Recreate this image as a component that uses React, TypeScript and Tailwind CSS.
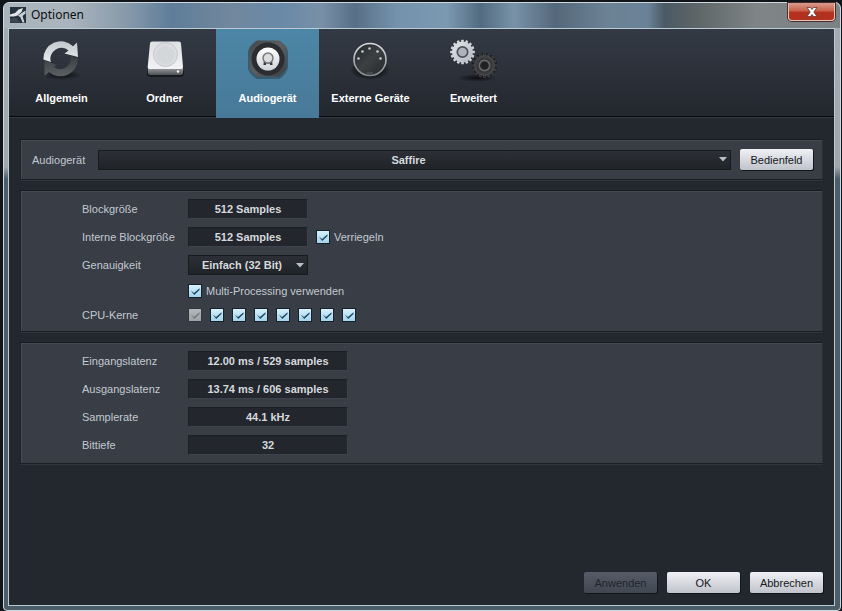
import { useState, type ReactNode } from "react";

function AppLogo() {
  return (
    <svg width="16" height="16" viewBox="0 0 16 16" aria-hidden="true">
      <rect width="16" height="16" fill="#26323d" />
      <path d="M0 7.500 L5 6 L8.500 2.500 L13 1 L11.500 5 L7.500 8.500 L4 9.500 L0 9.500 Z" fill="#dfe5e8" />
      <path d="M8 8.500 L15.500 3.500 V6.500 L12.500 9 L14.500 15.500 H12.500 L10.500 10.500 Z" fill="#c9d1d6" />
      <path d="M0 12 L6 10.500 L10 15.500 H0 Z" fill="#3b4955" />
    </svg>
  );
}

function RefreshIcon() {
  return (
    <svg width="44" height="44" viewBox="0 0 44 44" aria-hidden="true">
      <defs>
        <linearGradient id="rf-light" x1="0" y1="0" x2="0" y2="1">
          <stop offset="0" stopColor="#c3c8cd" />
          <stop offset="1" stopColor="#e9ecee" />
        </linearGradient>
        <linearGradient id="rf-dark" x1="0" y1="0" x2="0" y2="1">
          <stop offset="0" stopColor="#3a3d41" />
          <stop offset="1" stopColor="#5d6063" />
        </linearGradient>
        <radialGradient id="rf-shadow">
          <stop offset="0" stopColor="#0b0c0e" />
          <stop offset="1" stopColor="#0b0c0e" stopOpacity="0" />
        </radialGradient>
      </defs>
      <ellipse cx="22" cy="37" rx="20" ry="5" fill="url(#rf-shadow)" />
      <path d="M38 20.500 A17.500 17.500 0 0 1 9 34 L4.500 38 V22.500 L17 27 L13.500 28.500 A10.500 10.500 0 0 0 30.500 18 Z" fill="url(#rf-dark)" />
      <path d="M3.500 21.500 A17.300 17.300 0 0 1 33 8.300 L37 4.500 L38 19 L24.500 15.500 L28.500 12.500 A11 11 0 0 0 10.800 24 Z" fill="url(#rf-light)" />
    </svg>
  );
}

function DriveIcon() {
  return (
    <svg width="44" height="44" viewBox="0 0 44 44" aria-hidden="true">
      <defs>
        <linearGradient id="dr-top" x1="0" y1="0" x2="0" y2="1">
          <stop offset="0" stopColor="#dfe0e2" />
          <stop offset="1" stopColor="#f1f2f3" />
        </linearGradient>
        <linearGradient id="dr-front" x1="0" y1="0" x2="0" y2="1">
          <stop offset="0" stopColor="#9a9c9f" />
          <stop offset="1" stopColor="#4d5054" />
        </linearGradient>
      </defs>
      <path d="M4 33 H41 V36 Q41 39 37 39 H8 Q4 39 4 36 Z" fill="#17191c" />
      <path d="M5 30 H40 V34.500 Q40 37 37.500 37 H7.500 Q5 37 5 34.500 Z" fill="url(#dr-front)" />
      <path d="M9 3.500 H36 Q37.800 3.500 38 5.500 L40 29 Q40 31 38 31 H6.500 Q4.500 31 4.700 29 L7 5.500 Q7.200 3.500 9 3.500 Z" fill="url(#dr-top)" />
      <circle cx="22.500" cy="16.500" r="12" fill="#dadcdf" stroke="#c6c9cc" />
      <circle cx="22.500" cy="17" r="9" fill="#d3d7da" />
      <circle cx="35" cy="33.500" r="1.200" fill="#f4f4f4" />
    </svg>
  );
}

function AudioIcon() {
  return (
    <svg width="44" height="44" viewBox="0 0 44 44" aria-hidden="true">
      <defs>
        <linearGradient id="au-body" x1="0" y1="0" x2="1" y2="1">
          <stop offset="0" stopColor="#45484b" />
          <stop offset="0.500" stopColor="#5c5e60" />
          <stop offset="1" stopColor="#3b3d40" />
        </linearGradient>
        <linearGradient id="au-ring" x1="0" y1="0" x2="0" y2="1">
          <stop offset="0" stopColor="#ffffff" />
          <stop offset="1" stopColor="#cfd3d8" />
        </linearGradient>
      </defs>
      <path d="M10 3 H34 Q42 9 42 14 V30 Q39 38 33 41 H11 Q4 37 2 31 V13 Q4 7 10 3 Z" fill="#26404f" opacity="0.550" />
      <path d="M11 2.500 H33 L40.500 9.500 V31 L33 38.500 H11 L3.500 31 V9.500 Z" fill="url(#au-body)" />
      <circle cx="22" cy="21" r="16.500" fill="#2b2d30" />
      <circle cx="22" cy="21" r="11.500" fill="url(#au-ring)" />
      <path d="M18 20 H26 L26.500 27 H24 V25.500 H20 V27 H17.500 Z" fill="#34373a" />
      <circle cx="22" cy="20" r="5" fill="#d9dbdd" stroke="#777a7e" strokeWidth="1.500" />
    </svg>
  );
}

function MidiIcon() {
  return (
    <svg width="44" height="44" viewBox="0 0 44 44" aria-hidden="true">
      <defs>
        <linearGradient id="mi-face" x1="0" y1="0" x2="1" y2="1">
          <stop offset="0" stopColor="#25282b" />
          <stop offset="0.500" stopColor="#3d4042" />
          <stop offset="1" stopColor="#25282b" />
        </linearGradient>
        <linearGradient id="mi-rim" x1="0" y1="0" x2="0" y2="1">
          <stop offset="0" stopColor="#dcdee0" />
          <stop offset="1" stopColor="#85888b" />
        </linearGradient>
        <radialGradient id="mi-shadow">
          <stop offset="0.600" stopColor="#15171a" />
          <stop offset="1" stopColor="#15171a" stopOpacity="0" />
        </radialGradient>
      </defs>
      <ellipse cx="21" cy="32" rx="20" ry="10" fill="url(#mi-shadow)" />
      <circle cx="21" cy="21.500" r="16" fill="url(#mi-face)" stroke="url(#mi-rim)" strokeWidth="1.600" />
      <g fill="#c8cacc">
        <circle cx="9.500" cy="20.500" r="1.300" />
        <circle cx="13.500" cy="13.500" r="1.300" />
        <circle cx="20.500" cy="10.500" r="1.300" />
        <circle cx="28.500" cy="13.500" r="1.300" />
        <circle cx="31.500" cy="20.500" r="1.300" />
      </g>
      <path d="M18 35 H24" stroke="#5d6063" />
    </svg>
  );
}

const teeth = Array.from({ length: 16 }, (_, i) => i * 22.5);

function Gear({ x, y, fill, ring, hub }: { x: number; y: number; fill: string; ring: string; hub: string }) {
  return (
    <g transform={`translate(${x} ${y})`}>
      {teeth.map((angle) => (
        <rect key={angle} x="-1.300" y="-12.300" width="2.600" height="3.500" rx="0.500" fill={fill} transform={`rotate(${angle})`} />
      ))}
      <circle r="10.500" fill={fill} />
      <circle r="5.200" fill={hub} stroke={ring} strokeWidth="1.700" />
    </g>
  );
}

function GearsIcon() {
  return (
    <svg width="48" height="44" viewBox="0 0 48 44" aria-hidden="true">
      <defs>
        <radialGradient id="ge-shadow">
          <stop offset="0" stopColor="#0d0e10" />
          <stop offset="1" stopColor="#0d0e10" stopOpacity="0" />
        </radialGradient>
        <linearGradient id="ge-light" x1="0" y1="0" x2="1" y2="1">
          <stop offset="0" stopColor="#e3e6ea" />
          <stop offset="1" stopColor="#b3b8c0" />
        </linearGradient>
        <radialGradient id="ge-dark">
          <stop offset="0.500" stopColor="#2b2d2f" />
          <stop offset="1" stopColor="#4a4b4c" />
        </radialGradient>
      </defs>
      <ellipse cx="27" cy="40" rx="20" ry="4" fill="url(#ge-shadow)" />
      <circle cx="34.500" cy="27.500" r="12.500" fill="#191b1e" />
      <Gear x={34.5} y={27.5} fill="url(#ge-dark)" ring="#66686a" hub="#1f2123" />
      <Gear x={12.5} y={14} fill="url(#ge-light)" ring="#4d535c" hub="#aeb3bc" />
    </svg>
  );
}

const tabs: { name: string; icon: ReactNode }[] = [
  { name: "Allgemein", icon: <RefreshIcon /> },
  { name: "Ordner", icon: <DriveIcon /> },
  { name: "Audiogerät", icon: <AudioIcon /> },
  { name: "Externe Geräte", icon: <MidiIcon /> },
  { name: "Erweitert", icon: <GearsIcon /> },
];

const fieldStyle =
  "h-5 rounded-none border border-[#3d434a] border-t-[#1d2126] border-l-[#1d2126] bg-[#23272d] text-center text-[11px] font-bold leading-[18px] text-[#d5d9dd] outline-none";

function Panel({ className, children }: { className: string; children: ReactNode }) {
  return (
    <section
      className={`border border-t-[#181c21] border-l-[#1d2126] border-r-[#2b3037] border-b-[#1b1f24] bg-[#383d46] shadow-[inset_1px_1px_0_#454a53,0_1px_0_#30353c] ${className}`}
    >
      {children}
    </section>
  );
}

function Dropdown({ id, value, className }: { id: string; value: string; className: string }) {
  return (
    <div className={`grid ${className}`}>
      <select
        id={id}
        defaultValue={value}
        className="col-start-1 row-start-1 h-5 w-full appearance-none border border-[#171a1e] bg-linear-to-b from-[#2c3036] to-[#202429] pr-3 text-center text-[11px] font-bold leading-[18px] text-[#d5d9dd] outline-none"
      >
        <option>{value}</option>
      </select>
      <svg width="8" height="5" viewBox="0 0 8 5" aria-hidden="true" className="pointer-events-none col-start-1 row-start-1 mr-1 self-center justify-self-end">
        <path d="M0 0 H8 L4 4.500 Z" fill="#b9c0c7" />
      </svg>
    </div>
  );
}

function Check({ id, label, disabled = false }: { id: string; label?: string; disabled?: boolean }) {
  return (
    <span className="grid size-3.5 shrink-0 place-items-center">
      <input
        id={id}
        type="checkbox"
        defaultChecked
        disabled={disabled}
        aria-label={label}
        className="peer col-start-1 row-start-1 size-3.5 appearance-none border border-[#15222d] bg-linear-to-b from-[#d6f1fc] to-[#a3d3ea] disabled:border-[#30353c] disabled:from-[#b4b8bc] disabled:to-[#9ea3a8]"
      />
      <svg
        width="10"
        height="10"
        viewBox="0 0 10 10"
        aria-hidden="true"
        className="pointer-events-none invisible col-start-1 row-start-1 text-[#1d4560] peer-checked:visible peer-disabled:text-[#70767c]"
      >
        <path d="M0.800 4.500 L4 7 L9.500 2.200 L9.500 4 L4.200 9 Z" fill="currentColor" />
      </svg>
    </span>
  );
}

function Row({ label, htmlFor, tall = true, children }: { label?: string; htmlFor?: string; tall?: boolean; children: ReactNode }) {
  return (
    <div className={`flex items-center ${tall ? "h-5" : "h-4"}`}>
      <div className="w-[106px] shrink-0 whitespace-nowrap">{label && <label htmlFor={htmlFor}>{label}</label>}</div>
      {children}
    </div>
  );
}

function Button({ children, disabled = false }: { children: ReactNode; disabled?: boolean }) {
  return (
    <button
      type="button"
      disabled={disabled}
      className="h-[21px] w-[73px] shrink-0 rounded-xs bg-linear-to-b from-[#f0f1f5] to-[#c0c3ca] text-center text-[11px] text-[#15181c] shadow-[1px_1px_0_#12151a] disabled:from-[#565c67] disabled:to-[#414751] disabled:text-[#20252c]"
    >
      {children}
    </button>
  );
}

const readings = [
  { id: "in", label: "Eingangslatenz", value: "12.00 ms / 529 samples" },
  { id: "out", label: "Ausgangslatenz", value: "13.74 ms / 606 samples" },
  { id: "rate", label: "Samplerate", value: "44.1 kHz" },
  { id: "depth", label: "Bittiefe", value: "32" },
];

export default function App() {
  const [active, setActive] = useState("Audiogerät");

  return (
    <div className="flex min-h-screen bg-[#11151a] pt-[2px] pr-px pl-[3px] font-['Liberation_Sans',Arial,sans-serif] text-[11px] leading-4 text-[#c3c9d0]">
      <div className="flex flex-1 flex-col rounded-t-md rounded-b-sm border border-[#ced8df] bg-linear-to-b from-[#a4acb2] from-0% via-[#a0a8ae] via-27% to-[#4d5c69] to-29% pr-[5px] pb-[4px] pl-[4px]">
        <header className="-mr-[5px] -ml-[4px] flex h-[25px] items-start justify-between rounded-t-md bg-[linear-gradient(90deg,#aab4bc_0%,#a9b4bc_8%,#8598a9_15%,#5f7d99_20%,#71879d_27%,#6889a7_33%,#7890a7_38%,#587087_42%,#7592ac_47%,#7c99b2_53%,#526b80_57%,#7892a8_61%,#54687a_66%,#6c8294_72%,#6a8298_77%,#4b5a65_79%,#5e6668_83%,#7f8587_90%,#7c8284_100%)] pl-[6px]">
          <div className="flex items-center gap-[5px] pt-1">
            <AppLogo />
            <h1 className="font-['Noto_Sans','Open_Sans',sans-serif] text-xs leading-4 text-[#0b0e12]">Optionen</h1>
          </div>
          <button
            type="button"
            aria-label="Schließen"
            className="mr-[5px] flex h-[18px] w-[47px] items-center justify-center rounded-b-[4px] border border-t-0 border-[#e3c4bd] bg-linear-to-b from-[#d99a8d] from-0% via-[#c8614c] via-45% to-[#b3311f] to-55% shadow-[0_0_0_1px_#4a2c2a]"
          >
            <svg width="12" height="10" viewBox="0 0 12 10" aria-hidden="true">
              <path d="M1 0.500 H4.500 L6 2.500 L7.500 0.500 H11 L7.800 5 L11 9.500 H7.500 L6 7.500 L4.500 9.500 H1 L4.200 5 Z" fill="#fff" stroke="#5b3a3a" strokeWidth="0.800" />
            </svg>
          </button>
        </header>

        <div className="flex flex-1 flex-col border border-[#b9c9d2] bg-[#23282e]">
          <nav role="tablist" className="flex h-[89px] bg-[linear-gradient(#343a45_0,#23272e_87px,#050708_87px,#050708_88px,#373c42_88px)] pl-px">
            {tabs.map((tab) => (
              <button
                key={tab.name}
                type="button"
                role="tab"
                aria-selected={tab.name === active}
                onClick={() => setActive(tab.name)}
                className="flex w-[103px] flex-col items-center pt-[9px] font-bold whitespace-nowrap text-white aria-selected:bg-linear-to-b aria-selected:from-[#4c86a6] aria-selected:to-[#487998]"
              >
                {tab.icon}
                <span className="mt-2">{tab.name}</span>
              </button>
            ))}
          </nav>

          <main className="flex flex-1 flex-col gap-[10px] px-[11px] pt-[21px]">
            <Panel className="flex items-center py-[9px] pr-[9px] pl-[11px]">
              <label htmlFor="device" className="w-[66px] shrink-0">
                Audiogerät
              </label>
              <Dropdown id="device" value="Saffire" className="mr-[9px] flex-1" />
              <Button>Bedienfeld</Button>
            </Panel>

            <Panel className="flex flex-col gap-2 py-2 pl-[61px]">
              <Row label="Blockgröße" htmlFor="block">
                <input id="block" defaultValue="512 Samples" className={`w-[120px] ${fieldStyle}`} />
              </Row>
              <Row label="Interne Blockgröße" htmlFor="inner-block">
                <input id="inner-block" defaultValue="512 Samples" className={`mr-2 w-[120px] ${fieldStyle}`} />
                <Check id="lock" />
                <label htmlFor="lock" className="ml-1">
                  Verriegeln
                </label>
              </Row>
              <Row label="Genauigkeit" htmlFor="precision">
                <Dropdown id="precision" value="Einfach (32 Bit)" className="w-[120px]" />
              </Row>
              <Row tall={false}>
                <Check id="multi" />
                <label htmlFor="multi" className="ml-1">
                  Multi-Processing verwenden
                </label>
              </Row>
              <Row label="CPU-Kerne" htmlFor="core-1" tall={false}>
                <div className="flex gap-2">
                  {[1, 2, 3, 4, 5, 6, 7, 8].map((n) => (
                    <Check key={n} id={`core-${n}`} label={`CPU-Kern ${n}`} disabled={n === 1} />
                  ))}
                </div>
              </Row>
            </Panel>

            <Panel className="flex flex-col gap-2 py-2 pl-[61px]">
              {readings.map((reading) => (
                <Row key={reading.id} label={reading.label} htmlFor={reading.id}>
                  <output id={reading.id} className={`block w-[160px] ${fieldStyle}`}>
                    {reading.value}
                  </output>
                </Row>
              ))}
            </Panel>
          </main>

          <footer className="flex justify-end gap-[10px] pt-4 pr-[11px] pb-3">
            <Button disabled>Anwenden</Button>
            <Button>OK</Button>
            <Button>Abbrechen</Button>
          </footer>
        </div>
      </div>
    </div>
  );
}
